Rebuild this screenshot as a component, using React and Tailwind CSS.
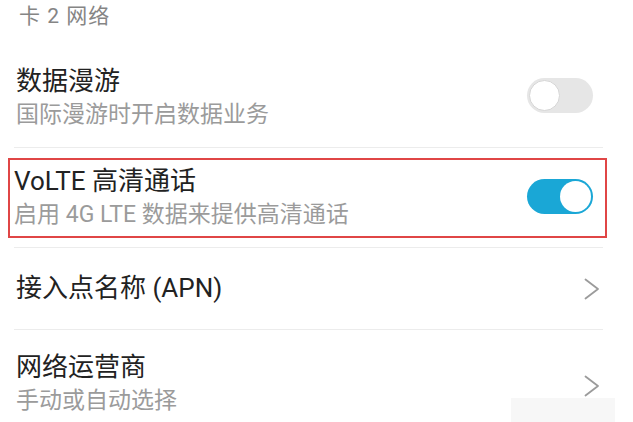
import React from 'react';

const font = { fontFamily: 'Roboto, "Noto Sans CJK SC", sans-serif' };

const Toggle = ({ on }) => (
    <div className={`w-[66px] h-[35px] rounded-full flex items-center p-[2px] ${on ? 'bg-[#1aa7d6] justify-end' : 'bg-[#e6e6e6] justify-start'}`}>
        <div className={`w-[31px] h-[31px] rounded-full bg-white ${on ? '' : 'border border-[#d6d6d6]'}`}></div>
    </div>
);

const Chevron = () => (
    <svg width="16" height="22" viewBox="0 0 16 22" fill="none">
        <polyline points="1.5,1.5 14,11 1.5,20.5" stroke="#9b9b9b" strokeWidth="1.8" strokeLinecap="round" strokeLinejoin="round" />
    </svg>
);

const Divider = () => <div className="h-px bg-[#ececec] ml-[14px] mr-[30px]"></div>;

export default function App() {
    return (
        <div className="w-[633px] h-[422px] bg-white overflow-hidden relative" style={font}>
            <div className="pl-[19px] text-[21px] tracking-[1px] leading-[32px] text-[#858585]">卡 2 网络</div>

            {/* 数据漫游 */}
            <div className="flex items-start justify-between pl-[16px] pr-[40px] pt-[32px] pb-[15px]">
                <div>
                    <div className="text-[26px] leading-[34px] text-[#222]">数据漫游</div>
                    <div className="text-[23px] leading-[34px] text-[#9b9b9b]">国际漫游时开启数据业务</div>
                </div>
                <div className="mt-[14px]"><Toggle on={false} /></div>
            </div>
            <Divider />

            {/* VoLTE, highlighted */}
            <div className="mt-[10px] ml-[8px] mr-[26px] border-2 border-[#e04646] flex items-center justify-between pl-[4px] pr-[12px] py-[4px]">
                <div>
                    <div className="text-[26px] leading-[34px] text-[#222]">VoLTE 高清通话</div>
                    <div className="text-[23px] leading-[34px] text-[#9b9b9b]">启用 4G LTE 数据来提供高清通话</div>
                </div>
                <div className="-mt-[3px]"><Toggle on={true} /></div>
            </div>
            <div className="mt-[9px]"><Divider /></div>

            {/* APN */}
            <div className="h-[81px] flex items-center justify-between pl-[16px] pr-[33px]">
                <div className="text-[26px] leading-[34px] text-[#222] -mt-[2px]">接入点名称 (APN)</div>
                <Chevron />
            </div>
            <Divider />

            {/* 网络运营商 */}
            <div className="flex items-start justify-between pl-[16px] pr-[33px] pt-[20px]">
                <div>
                    <div className="text-[26px] leading-[34px] text-[#222]">网络运营商</div>
                    <div className="text-[23px] leading-[34px] text-[#9b9b9b]">手动或自动选择</div>
                </div>
                <div className="mt-[25px]"><Chevron /></div>
            </div>

            <div className="absolute right-[18px] bottom-0 w-[104px] h-[24px] bg-[#f7f7f7]"></div>
        </div>
    );
}
